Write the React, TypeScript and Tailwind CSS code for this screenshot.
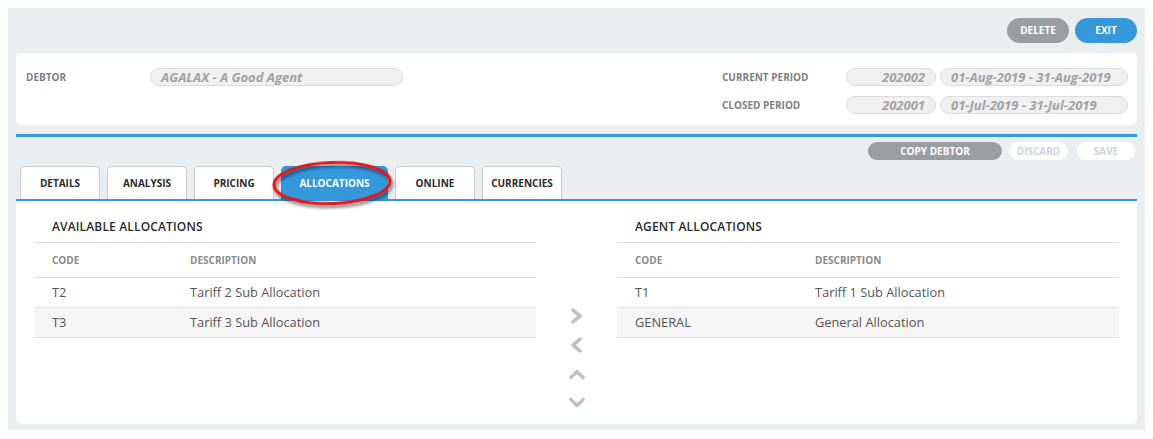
import { useState } from "react"

interface Allocation {
  code: string
  description: string
}

const availableAllocations: Allocation[] = [
  { code: "T2", description: "Tariff 2 Sub Allocation" },
  { code: "T3", description: "Tariff 3 Sub Allocation" },
]

const agentAllocations: Allocation[] = [
  { code: "T1", description: "Tariff 1 Sub Allocation" },
  { code: "GENERAL", description: "General Allocation" },
]

const tabs = [
  { label: "DETAILS", width: "w-[80px]" },
  { label: "ANALYSIS", width: "w-[80px]" },
  { label: "PRICING", width: "w-[80px]" },
  { label: "ALLOCATIONS", width: "w-[107px]" },
  { label: "ONLINE", width: "w-[80px]" },
  { label: "CURRENCIES", width: "w-[80px]" },
]

/** Read-only pill shaped field */
function Field({ value, className = "", right = false }: { value: string; className?: string; right?: boolean }) {
  return (
    <div
      className={`h-[18px] rounded-full border border-[#dcdcdc] bg-[#f0f0f0] flex items-center px-[10px] text-[13px] font-bold italic text-[#a2a2a2] leading-none ${
        right ? "justify-end" : ""
      } ${className}`}
    >
      {value}
    </div>
  )
}

function AllocationTable({
  title,
  rows,
  codeWidth,
}: {
  title: string
  rows: Allocation[]
  codeWidth: string
}) {
  return (
    <div className="w-[502px]">
      <div className="pt-[18px] pb-[7px] pl-[18px] text-[12px] leading-[16px] font-semibold tracking-[0.15px] text-[#2b2b2b] border-b border-[#dedede]">
        {title}
      </div>
      <div className="flex items-center h-[35px] border-b border-[#dedede] text-[10px] font-bold text-[#8a8a8a]">
        <div className={`${codeWidth} pl-[18px]`}>CODE</div>
        <div>DESCRIPTION</div>
      </div>
      {rows.map((r, i) => (
        <div
          key={r.code}
          className={`flex items-center h-[30px] border-b border-[#dedede] text-[12.8px] text-[#555] ${
            i % 2 === 1 ? "bg-[#f5f5f5]" : "bg-white"
          }`}
        >
          <div className={`${codeWidth} pl-[18px]`}>{r.code}</div>
          <div>{r.description}</div>
        </div>
      ))}
    </div>
  )
}

function MoveButtons() {
  const stroke = "#bcc2c6"
  return (
    <div className="w-[81px] flex flex-col items-center pt-[100px]">
      <div className="h-[29px] flex items-center justify-center">
        <svg width="13" height="16" viewBox="0 0 13 16">
          <path d="M3 2.2 L10 8 L3 13.8" fill="none" stroke={stroke} strokeWidth="3.6" strokeLinecap="round" strokeLinejoin="round" />
        </svg>
      </div>
      <div className="h-[29px] flex items-center justify-center">
        <svg width="13" height="16" viewBox="0 0 13 16">
          <path d="M10 2.2 L3 8 L10 13.8" fill="none" stroke={stroke} strokeWidth="3.6" strokeLinecap="round" strokeLinejoin="round" />
        </svg>
      </div>
      <div className="h-[29px] flex items-center justify-center">
        <svg width="18" height="12" viewBox="0 0 18 12">
          <path d="M3 9.5 L9 3.5 L15 9.5" fill="none" stroke={stroke} strokeWidth="3.6" strokeLinecap="round" strokeLinejoin="round" />
        </svg>
      </div>
      <div className="h-[29px] flex items-center justify-center">
        <svg width="18" height="12" viewBox="0 0 18 12">
          <path d="M3 2.5 L9 8.5 L15 2.5" fill="none" stroke={stroke} strokeWidth="3.6" strokeLinecap="round" strokeLinejoin="round" />
        </svg>
      </div>
    </div>
  )
}

export default function App() {
  const [activeTab, setActiveTab] = useState("ALLOCATIONS")

  return (
    <div className="min-h-screen bg-white p-2 font-['Open_Sans',sans-serif]">
      <div className="bg-[#ebeef0] px-2 pb-[6px]">
        {/* ── Top actions ── */}
        <div className="flex justify-end gap-[6px] pt-[10px] pb-[10px]">
          <button className="w-[62px] h-[25px] rounded-full bg-[#9a9ea1] text-white text-[10px] font-bold">
            DELETE
          </button>
          <button className="w-[62px] h-[25px] rounded-full bg-[#3498db] text-white text-[10px] font-bold">
            EXIT
          </button>
        </div>

        {/* ── Debtor header card ── */}
        <div className="bg-white rounded-[5px] flex justify-between pt-[15px] pb-[11px] pl-[10px] pr-[9px]">
          <div className="flex items-center h-[18px]">
            <div className="w-[124px] text-[10px] font-bold text-[#7b7f82]">DEBTOR</div>
            <Field value="AGALAX - A Good Agent" className="w-[253px]" />
          </div>
          <div className="flex flex-col gap-[10px]">
            <div className="flex items-center">
              <div className="w-[124px] text-[10px] font-bold text-[#7b7f82]">CURRENT PERIOD</div>
              <Field value="202002" right className="w-[90px]" />
              <Field value="01-Aug-2019 - 31-Aug-2019" className="w-[188px] ml-[4px]" />
            </div>
            <div className="flex items-center">
              <div className="w-[124px] text-[10px] font-bold text-[#7b7f82]">CLOSED PERIOD</div>
              <Field value="202001" right className="w-[90px]" />
              <Field value="01-Jul-2019 - 31-Jul-2019" className="w-[188px] ml-[4px]" />
            </div>
          </div>
        </div>

        <div className="mt-[9px] h-[3px] bg-[#3498db]" />

        {/* ── Record actions ── */}
        <div className="mt-[5px] flex justify-end pr-[2px]">
          <button className="w-[134px] h-[18px] rounded-full bg-[#9a9ea1] text-white text-[10px] font-bold">
            COPY DEBTOR
          </button>
          <button className="ml-[7px] w-[59px] h-[18px] rounded-full bg-white text-[#cfd2d4] text-[10px] font-bold">
            DISCARD
          </button>
          <button className="ml-[9px] w-[58px] h-[18px] rounded-full bg-white text-[#cfd2d4] text-[10px] font-bold">
            SAVE
          </button>
        </div>

        {/* ── Tabs ── */}
        <div className="relative mt-[6px] flex gap-[7px] pl-[4px]">
          {tabs.map((t) => (
            <button
              key={t.label}
              onClick={() => setActiveTab(t.label)}
              className={`${t.width} h-[33px] rounded-t-[5px] border border-b-0 text-[10px] font-bold ${
                activeTab === t.label
                  ? "bg-[#3498db] border-[#3498db] text-white"
                  : "bg-white border-[#c9cccf] text-[#2b2b2b]"
              }`}
            >
              {t.label}
            </button>
          ))}
          {/* hand drawn annotation */}
          <svg className="absolute left-[246px] top-[-11px] pointer-events-none" width="150" height="62" viewBox="0 0 150 62">
            <defs>
              <filter id="shadow" x="-20%" y="-40%" width="140%" height="180%">
                <feDropShadow dx="1.5" dy="3" stdDeviation="1.8" floodColor="#000" floodOpacity="0.5" />
              </filter>
            </defs>
            <ellipse
              cx="70"
              cy="28"
              rx="58"
              ry="20.5"
              fill="none"
              stroke="#e3161b"
              strokeWidth="3"
              transform="rotate(-2 70 28)"
              filter="url(#shadow)"
            />
          </svg>
        </div>
        <div className="h-[2px] bg-[#3498db]" />

        {/* ── Allocations ── */}
        <div className="bg-white rounded-b-[5px] h-[223px] flex px-[18px]">
          <AllocationTable title="AVAILABLE ALLOCATIONS" rows={availableAllocations} codeWidth="w-[156px]" />
          <MoveButtons />
          <AllocationTable title="AGENT ALLOCATIONS" rows={agentAllocations} codeWidth="w-[198px]" />
        </div>
      </div>
    </div>
  )
}
